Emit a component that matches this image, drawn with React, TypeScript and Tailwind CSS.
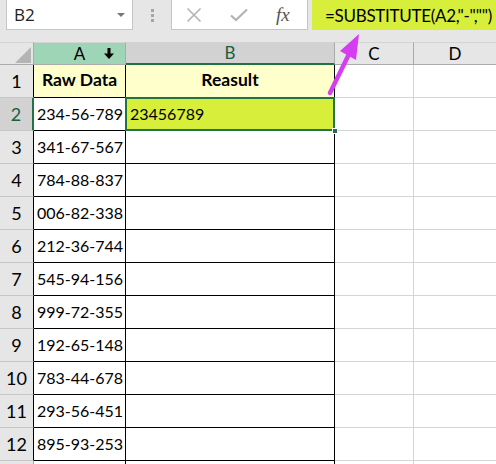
import React from "react";

const rows: string[] = [
  "234-56-789",
  "341-67-567",
  "784-88-837",
  "006-82-338",
  "212-36-744",
  "545-94-156",
  "999-72-355",
  "192-65-148",
  "783-44-678",
  "293-56-451",
  "895-93-253",
];

const font = { fontFamily: "Lato, 'Open Sans', sans-serif" };

function DownArrow() {
  return (
    <svg width="10" height="12" viewBox="0 0 10 12" className="absolute left-[70px] top-[5px]">
      <rect x="3.5" y="0" width="3" height="6" fill="#000" />
      <polygon points="0,5.5 10,5.5 5,11" fill="#000" />
    </svg>
  );
}

export default function App() {
  return (
    <div
      className="relative w-[496px] h-[464px] overflow-hidden bg-[#e6e6e6] text-black"
      style={font}
    >
      {/* Top bar */}
      <div className="h-[42px] flex items-start">
        <div className="ml-[6px] w-[127px] h-[30px] bg-white border border-t-0 border-[#c6c6c6] flex items-center justify-between pl-[7px] pr-[7px]">
          <span className="text-[17px] leading-none font-['Open_Sans',sans-serif] text-[#222]">B2</span>
          <svg width="8" height="4" viewBox="0 0 8 4">
            <polygon points="0,0 8,0 4,4" fill="#777" />
          </svg>
        </div>
        <div className="w-[38px] h-[30px] flex flex-col items-center justify-center gap-[2px]">
          <div className="w-[3px] h-[3px] bg-[#a6a6a6]" />
          <div className="w-[3px] h-[3px] bg-[#a6a6a6]" />
          <div className="w-[3px] h-[3px] bg-[#a6a6a6]" />
        </div>
        <div className="w-[137px] h-[30px] bg-white border border-t-0 border-[#c6c6c6] flex items-center">
          <svg width="16" height="16" viewBox="0 0 16 16" className="ml-[14px]">
            <path d="M1.5 1.5 L14.5 14.5 M14.5 1.5 L1.5 14.5" stroke="#b3b3b3" strokeWidth="1.6" fill="none" />
          </svg>
          <svg width="18" height="14" viewBox="0 0 18 14" className="ml-[28px]">
            <path d="M1 7.5 L6 12 L17 1.5" stroke="#b3b3b3" strokeWidth="2.2" fill="none" />
          </svg>
          <span className="ml-[28px] text-[19px] leading-none italic text-[#555] font-['Liberation_Serif',serif]">
            fx
          </span>
        </div>
        <div className="ml-[4px] flex-1 h-[30px] bg-[#d7ef3b] flex items-center pl-[13px]">
          <span className="text-[17px] leading-none whitespace-nowrap tracking-[-0.3px]">=SUBSTITUTE(A2,"-","")</span>
        </div>
      </div>

      {/* Grid */}
      <div className="grid grid-cols-[34px_92px_209px_79px_1fr] grid-rows-[23px_repeat(13,33px)]">
        {/* Header row */}
        <div className="relative bg-[#e6e6e6] border-r border-b border-[#ababab] border-t border-t-[#d4d4d4]">
          <svg width="16" height="16" viewBox="0 0 16 16" className="absolute left-[15px] top-[4px]">
            <polygon points="0,16 16,16 16,0" fill="#b4b4b4" />
          </svg>
        </div>
        <div className="relative bg-[#9fd5b7] border-r border-b border-[#ababab] border-t border-t-[#d4d4d4] flex items-center justify-center text-[17px]">
          A
          <DownArrow />
        </div>
        <div className="bg-[#d2d2d2] border-r border-[#ababab] border-b-2 border-b-[#217346] border-t border-t-[#d4d4d4] flex items-center justify-center text-[17px] text-[#1e5c3a]">
          B
        </div>
        <div className="bg-[#e6e6e6] border-r border-b border-[#ababab] border-t border-t-[#d4d4d4] flex items-center justify-center text-[17px]">
          C
        </div>
        <div className="bg-[#e6e6e6] border-b border-[#ababab] border-t border-t-[#d4d4d4] flex items-center justify-center text-[17px]">
          D
        </div>

        {/* Row 1 */}
        <div className="bg-[#e6e6e6] border-r border-r-[#000] border-b border-b-[#c6c6c6] flex items-end justify-center pb-[2px] text-[18px]">
          1
        </div>
        <div className="bg-[#ffffcc] border-r border-b border-black flex items-end justify-center pb-[4px] text-[17.5px] font-bold">
          Raw Data
        </div>
        <div className="bg-[#ffffcc] border-r border-b border-black flex items-end justify-center pb-[4px] text-[17.5px] font-bold">
          Reasult
        </div>
        <div className="bg-white border-r border-b border-[#d4d4d4]" />
        <div className="bg-white border-b border-[#d4d4d4]" />

        {rows.map((v, i) => {
          const n = i + 2;
          const sel = n === 2;
          return (
            <React.Fragment key={n}>
              <div
                className={
                  sel
                    ? "bg-[#d2d2d2] border-r-2 border-r-[#217346] border-b border-b-[#c6c6c6] flex items-end justify-center pb-[2px] text-[18px] text-[#1e5c3a]"
                    : "bg-[#e6e6e6] border-r border-r-[#000] border-b border-b-[#c6c6c6] flex items-end justify-center pb-[2px] text-[18px]"
                }
              >
                {n}
              </div>
              <div className="bg-white border-r border-b border-black flex items-end pl-[3px] pb-[4px] text-[16px] whitespace-nowrap">
                {v}
              </div>
              {sel ? (
                <div className="relative bg-[#d7ef3b] border-r border-b border-black flex items-end pl-[4px] pb-[4px] text-[16px]">
                  23456789
                  <div className="absolute -left-px -top-px -right-px -bottom-px border-2 border-[#217346]" />
                  <div className="absolute -right-[4px] -bottom-[4px] w-[6px] h-[6px] bg-[#217346] border border-white" />
                </div>
              ) : (
                <div className="bg-white border-r border-b border-black" />
              )}
              <div className="bg-white border-r border-b border-[#d4d4d4]" />
              <div className="bg-white border-b border-[#d4d4d4]" />
            </React.Fragment>
          );
        })}

        {/* Row 13 (partial) */}
        <div className="bg-[#e6e6e6] border-r border-[#ababab]" />
        <div className="bg-white border-r border-black" />
        <div className="bg-white border-r border-black" />
        <div className="bg-white border-r border-[#d4d4d4]" />
        <div className="bg-white" />
      </div>

      {/* Pointer arrow */}
      <svg
        width="496"
        height="464"
        viewBox="0 0 496 464"
        className="absolute left-0 top-0 pointer-events-none"
      >
        <line x1="330" y1="93" x2="350" y2="52" stroke="#d43ef0" strokeWidth="4.5" strokeLinecap="round" />
        <polygon points="359,34 340,51 356,60" fill="#d43ef0" />
      </svg>
    </div>
  );
}
